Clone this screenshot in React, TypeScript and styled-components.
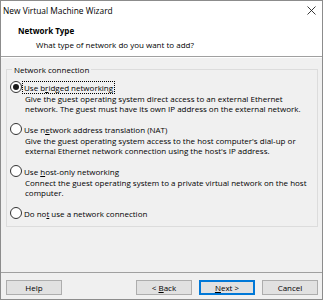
import React from 'react';
import styled, { createGlobalStyle } from 'styled-components';

const GlobalStyle = createGlobalStyle`
  html, body {
    margin: 0;
    padding: 0;
    background: #ffffff;
  }
  * {
    box-sizing: border-box;
  }
`;

const Window = styled.div`
  width: 323px;
  height: 300px;
  border: 1px solid #8c8c8c;
  display: flex;
  flex-direction: column;
  font-family: 'Open Sans', 'Noto Sans', sans-serif;
  font-size: 8px;
  color: #000;
  background: #ffffff;
`;

const TitleBar = styled.div`
  height: 19px;
  display: flex;
  align-items: center;
  justify-content: space-between;
  padding: 0 6px 0 2px;
`;

const Title = styled.span`
  font-size: 8.4px;
`;

const CloseButton = styled.div`
  width: 10px;
  height: 10px;
  display: flex;
  align-items: center;
  justify-content: center;
`;

const Header = styled.div`
  height: 37px;
  padding: 5px 0 0 17px;
  display: flex;
  flex-direction: column;
  border-bottom: 1px solid #a0a0a0;
`;

const HeaderTitle = styled.div`
  font-weight: 700;
  line-height: 11px;
`;

const HeaderSubtitle = styled.div`
  padding-left: 18px;
  margin-top: 4px;
  line-height: 10px;
`;

const Body = styled.div`
  flex: 1;
  background: #f0f0f0;
  border-top: 1px solid #ffffff;
  display: flex;
  flex-direction: column;
`;

const Content = styled.div`
  flex: 1;
  padding: 6px 4px 0 5px;
`;

const GroupBox = styled.fieldset`
  margin: 0;
  padding: 6px 0 6px 3px;
  border: 1px solid #dcdcdc;
  height: 163px;
`;

const Legend = styled.legend`
  padding: 0 2px;
  margin-left: 2px;
  line-height: 11px;
`;

const Option = styled.div`
  display: flex;
  flex-direction: column;
  & + & {
    margin-top: 10px;
  }
`;

const OptionRow = styled.div`
  display: flex;
  align-items: center;
  height: 12px;
`;

const Radio = styled.span<{ $checked?: boolean }>`
  width: 12px;
  height: 12px;
  border-radius: 50%;
  border: 1px solid #333333;
  background: #ffffff;
  display: flex;
  align-items: center;
  justify-content: center;
  &::after {
    content: '';
    width: 6px;
    height: 6px;
    border-radius: 50%;
    background: ${(p) => (p.$checked ? '#1a1a1a' : 'transparent')};
  }
`;

const OptionLabel = styled.span<{ $focused?: boolean }>`
  margin-left: 0;
  padding: 0 1px;
  line-height: 11px;
  border: 1px dotted ${(p) => (p.$focused ? '#000' : 'transparent')};
`;

const Description = styled.div`
  padding: 0 3px 0 15px;
  line-height: 9.5px;
  margin-top: 1px;
`;

const Footer = styled.div`
  height: 27px;
  border-top: 1px solid #a0a0a0;
  display: flex;
  align-items: flex-start;
  padding: 7px 4px 0 5px;
`;

const Button = styled.button<{ $default?: boolean }>`
  width: 56px;
  height: 15px;
  padding: 0;
  font-family: inherit;
  font-size: 8px;
  color: #000;
  background: #e1e1e1;
  border: 1px solid ${(p) => (p.$default ? '#0078d7' : '#adadad')};
  box-shadow: ${(p) => (p.$default ? 'inset 0 0 0 1px #0078d7' : 'none')};
  & + & {
    margin-left: 7px;
  }
`;

const Spacer = styled.div`
  flex: 1;
`;

const options = [
  {
    label: (
      <>
        Use b<u>r</u>idged networking
      </>
    ),
    desc: 'Give the guest operating system direct access to an external Ethernet network. The guest must have its own IP address on the external network.',
    checked: true,
  },
  {
    label: (
      <>
        Use n<u>e</u>twork address translation (NAT)
      </>
    ),
    desc: "Give the guest operating system access to the host computer's dial-up or external Ethernet network connection using the host's IP address.",
  },
  {
    label: (
      <>
        Use <u>h</u>ost-only networking
      </>
    ),
    desc: 'Connect the guest operating system to a private virtual network on the host computer.',
  },
  {
    label: (
      <>
        Do no<u>t</u> use a network connection
      </>
    ),
  },
];

export default function App() {
  return (
    <>
      <GlobalStyle />
      <Window>
        <TitleBar>
          <Title>New Virtual Machine Wizard</Title>
          <CloseButton>
            <svg width="9" height="9" viewBox="0 0 9 9">
              <path d="M0.5 0.5 L8.5 8.5 M8.5 0.5 L0.5 8.5" stroke="#222" strokeWidth="0.9" fill="none" />
            </svg>
          </CloseButton>
        </TitleBar>
        <Header>
          <HeaderTitle>Network Type</HeaderTitle>
          <HeaderSubtitle>What type of network do you want to add?</HeaderSubtitle>
        </Header>
        <Body>
          <Content>
            <GroupBox>
              <Legend>Network connection</Legend>
              {options.map((o, i) => (
                <Option key={i}>
                  <OptionRow>
                    <Radio $checked={o.checked} />
                    <OptionLabel $focused={o.checked}>{o.label}</OptionLabel>
                  </OptionRow>
                  {o.desc && <Description>{o.desc}</Description>}
                </Option>
              ))}
            </GroupBox>
          </Content>
          <Footer>
            <Button>Help</Button>
            <Spacer />
            <Button>
              &lt; <u>B</u>ack
            </Button>
            <Button $default>
              <u>N</u>ext &gt;
            </Button>
            <Button>Cancel</Button>
          </Footer>
        </Body>
      </Window>
    </>
  );
}
